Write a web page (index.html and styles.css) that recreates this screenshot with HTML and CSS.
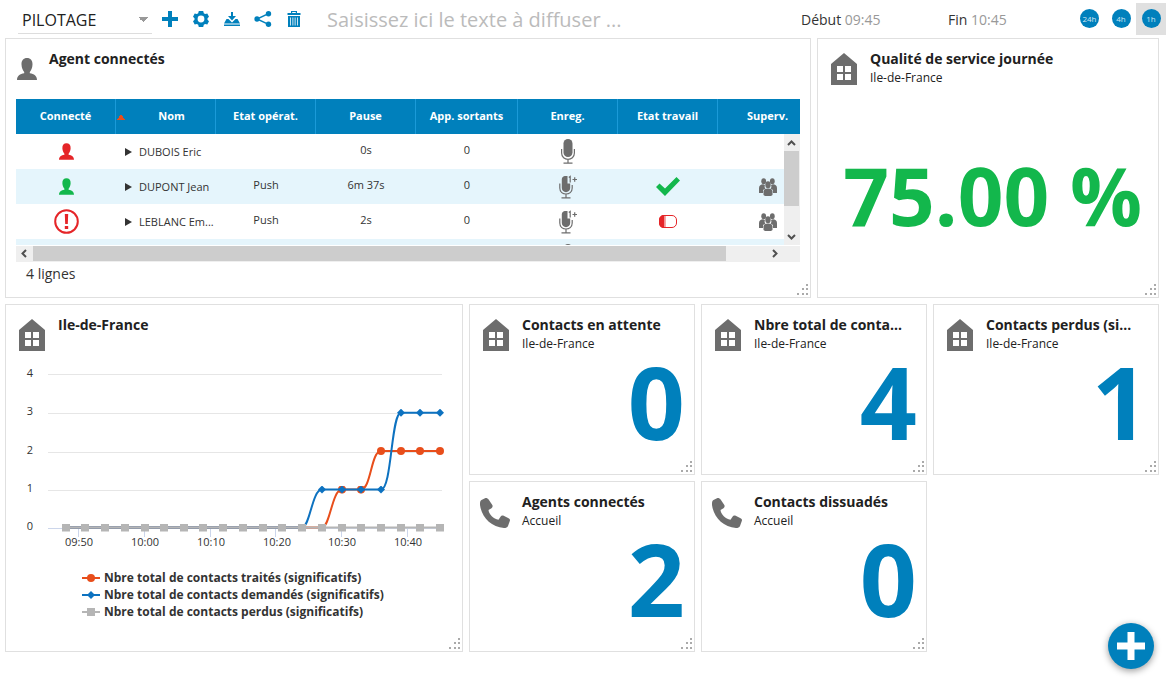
FILE: index.html
```html
<!DOCTYPE html>
<html lang="fr">
<head>
<meta charset="utf-8">
<title>Pilotage</title>
<link rel="stylesheet" href="styles.css">
</head>
<body>
<svg class="sprite" aria-hidden="true">
  <symbol id="house" viewBox="0 0 26 32"><path fill-rule="evenodd" d="M13 0 26 11V32H0V11ZM6 13V19H12V13ZM14 13V19H20V13ZM6 21V27H12V21ZM14 21V27H20V21Z"/></symbol>
  <symbol id="person" viewBox="0 0 20 22"><path d="M10 0C13.500 0 15.700 2.500 15.500 6.500C15.400 10 14 12.500 12.800 13.900V15.200C17 16 20 17.500 20 22H0C0 17.500 3 16 7.200 15.200V13.900C6 12.500 4.600 10 4.500 6.500C4.300 2.500 6.500 0 10 0Z"/></symbol>
  <symbol id="phone" viewBox="0 0 30 30"><path d="M5.500 0C7 0 8 .5 8.800 1.800L12.300 7C13 8.300 12.500 9.500 11.500 10.200L8.500 12C9 16.500 13.500 21 18.500 21.800L20.500 18.700C21.200 17.500 22.500 17.300 23.700 17.800L29 20.500C30 21.200 30.200 22 29.800 23L28 28C27.300 29.600 26 30 24 30C11 29 1.500 19 0 7C-.1 5 0 3 1.500 2Z"/></symbol>
  <symbol id="mic" viewBox="0 0 14 25"><rect x="2.500" width="9" height="18" rx="4.500"/><path d="M.6 10V14C.6 22.500 13.400 22.500 13.400 14V10M7 20V24M2.500 24.200H11.500" fill="none" stroke="currentColor" stroke-width="1.200"/></symbol>
  <symbol id="mic-plus" viewBox="0 0 19 24"><path d="M7 1C3.500 1 2.800 3 2.800 5V13C2.800 18.500 11.200 18.500 11.200 13V8.500H8.500V1Z"/><path d="M.8 8.500V13C.8 21 13.200 21 13.200 13V10M7 19V22.500M2.500 22.800H11.500M9.800 2.500 11.200 1.500V7.500M13.500 4.500H18M15.700 2.200V6.800" fill="none" stroke="currentColor" stroke-width="1.200"/></symbol>
  <symbol id="team" viewBox="0 0 18 18"><ellipse cx="4.700" cy="3.200" rx="2.400" ry="3"/><ellipse cx="13.300" cy="3.200" rx="2.400" ry="3"/><path d="M0 15V10C0 7.500 2 6.300 4 6.300L6 7C5.200 8.500 5.800 10 6.500 10.500L4 12V15ZM18 15V10C18 7.500 16 6.300 14 6.300L12 7C12.800 8.500 12.200 10 11.500 10.500L14 12V15Z"/><ellipse cx="9" cy="6.800" rx="2.700" ry="3.500"/><path d="M4.500 17V13.500C4.500 11.500 6 10.400 9 10.400S13.500 11.500 13.500 13.500V17L12 18H6Z"/></symbol>
  <symbol id="grip" viewBox="0 0 11 11"><path d="M9 0h2v2h-2zM9 4h2v2h-2zM9 9h2v2h-2zM5 4h2v2h-2zM5 9h2v2h-2zM0 9h2v2H0z"/></symbol>
</svg>

<header class="toolbar">
  <select class="board-select" aria-label="Tableau"><option>PILOTAGE</option></select>
  <div class="actions">
    <button type="button" aria-label="Ajouter"><svg width="16" height="16" viewBox="0 0 16 16"><path d="M6 0H10V6H16V10H10V16H6V10H0V6H6Z"/></svg></button>
    <button type="button" aria-label="Paramètres"><svg width="16" height="16" viewBox="0 0 16 16"><path fill-rule="evenodd" d="M5.800 0H10.200L10.800 2.200L12.100 3L14.300 2.400L16 5.700L14.500 7.300V8.700L16 10.300L14.300 13.600L12.100 13L10.800 13.800L10.200 16H5.800L5.200 13.800L3.900 13L1.700 13.600L0 10.300L1.500 8.700V7.300L0 5.700L1.700 2.400L3.900 3L5.200 2.200ZM8 4.600A3.400 3.400 0 1 0 8 11.400A3.400 3.400 0 1 0 8 4.600Z"/></svg></button>
    <button type="button" aria-label="Enregistrer"><svg width="16" height="16" viewBox="0 0 16 16"><path d="M7 1H9V5H12L8 9.500L4 5H7ZM0 12.500L2.500 8H4.500L8 11.500L11.500 8H13.500L16 12.500ZM0 13.500H16V15H0Z"/></svg></button>
    <button type="button" aria-label="Partager"><svg width="18" height="16" viewBox="0 0 18 16"><circle cx="3" cy="8" r="2.700"/><circle cx="14.500" cy="2.700" r="2.700"/><circle cx="14.500" cy="13.300" r="2.700"/><path d="M14.500 2.700 3 8 14.500 13.300" fill="none" stroke="currentColor" stroke-width="1.400"/></svg></button>
    <button type="button" aria-label="Supprimer"><svg width="14" height="16" viewBox="0 0 14 16"><path fill-rule="evenodd" d="M4 0H10V2H13.500V4H.5V2H4ZM5.200 1V2H8.800V1ZM1 5H13V16H1ZM3.200 6.500V14.500H4V6.500ZM5.500 6.500V14.500H6.300V6.500ZM7.700 6.500V14.500H8.500V6.500ZM10 6.500V14.500H10.800V6.500Z"/></svg></button>
  </div>
  <input class="broadcast" type="text" aria-label="Texte à diffuser" placeholder="Saisissez ici le texte à diffuser ...">
  <div class="period period-start">Début <time>09:45</time></div>
  <div class="period period-end">Fin <time>10:45</time></div>
  <div class="ranges">
    <button type="button"><span>24h</span></button>
    <button type="button"><span>4h</span></button>
    <button type="button" class="active"><span>1h</span></button>
  </div>
</header>

<main class="board">
  <section class="card card-agents">
    <header class="card-head">
      <svg class="head-icon head-person"><use href="#person"/></svg>
      <h2>Agent connectés</h2>
    </header>
    <div class="grid-frame">
      <div class="grid-view">
        <table class="agents">
          <colgroup><col><col><col><col><col class="wide"><col><col><col></colgroup>
          <thead>
            <tr><th>Connecté</th><th class="sorted">Nom</th><th>Etat opérat.</th><th>Pause</th><th>App. sortants</th><th>Enreg.</th><th>Etat travail</th><th>Superv.</th></tr>
          </thead>
          <tbody>
            <tr>
              <td><svg class="status red"><use href="#person"/></svg></td>
              <td class="name">DUBOIS Eric</td><td></td><td class="value">0s</td><td class="value">0</td>
              <td><svg class="mic"><use href="#mic"/></svg></td><td></td><td></td>
            </tr>
            <tr>
              <td><svg class="status green"><use href="#person"/></svg></td>
              <td class="name">DUPONT Jean</td><td class="value">Push</td><td class="value">6m 37s</td><td class="value">0</td>
              <td><svg class="mic-plus"><use href="#mic-plus"/></svg></td>
              <td><svg class="green" width="24" height="19" viewBox="0 0 24 19"><path d="M0 10 3.500 6.500 9 11.500 20.500 0 24 3.500 9 19Z"/></svg></td>
              <td><svg class="team"><use href="#team"/></svg></td>
            </tr>
            <tr>
              <td><svg class="red" width="25" height="25" viewBox="0 0 25 25"><circle cx="12.500" cy="12.500" r="11.300" fill="none" stroke="currentColor" stroke-width="2"/><path d="M10.800 5H14.200L13.800 15H11.200ZM10.800 17H14.200V20H10.800Z"/></svg></td>
              <td class="name">LEBLANC Em...</td><td class="value">Push</td><td class="value">2s</td><td class="value">0</td>
              <td><svg class="mic-plus"><use href="#mic-plus"/></svg></td>
              <td><svg class="red" width="18" height="13" viewBox="0 0 18 13"><rect x=".5" y=".5" width="17" height="12" rx="4.500" fill="#fff" stroke="currentColor"/><path d="M5 0H5.500V13H5C2 13 0 11 0 8V5C0 2 2 0 5 0Z"/><path d="M6.500 1V12" stroke="#f3a9a9"/></svg></td>
              <td><svg class="team"><use href="#team"/></svg></td>
            </tr>
            <tr>
              <td></td><td></td><td></td><td></td><td></td>
              <td><svg class="mic"><use href="#mic"/></svg></td><td></td><td></td>
            </tr>
          </tbody>
        </table>
      </div>
      <div class="vscroll" aria-hidden="true">
        <svg width="9" height="6" viewBox="0 0 9 6"><path d="M1 5 4.500 1.500 8 5"/></svg>
        <div class="vthumb"></div>
        <svg class="end" width="9" height="6" viewBox="0 0 9 6"><path d="M1 1 4.500 4.500 8 1"/></svg>
      </div>
      <div class="hscroll" aria-hidden="true">
        <svg width="6" height="9" viewBox="0 0 6 9"><path d="M5 1 1.500 4.500 5 8"/></svg>
        <div class="hthumb"></div>
        <svg class="end" width="6" height="9" viewBox="0 0 6 9"><path d="M1 1 4.500 4.500 1 8"/></svg>
      </div>
    </div>
    <p class="count">4 lignes</p>
    <svg class="grip"><use href="#grip"/></svg>
  </section>

  <section class="card card-quality">
    <header class="card-head">
      <svg class="head-icon"><use href="#house"/></svg>
      <div><h2>Qualité de service journée</h2><p>Ile-de-France</p></div>
    </header>
    <div class="rate">75.00 %</div>
    <svg class="grip"><use href="#grip"/></svg>
  </section>

  <section class="card card-chart">
    <header class="card-head">
      <svg class="head-icon"><use href="#house"/></svg>
      <h2>Ile-de-France</h2>
    </header>
    <svg class="chart" viewBox="6 360 456 192" role="img" aria-label="Contacts Ile-de-France">
      <defs>
        <marker id="dot" markerUnits="userSpaceOnUse" markerWidth="8" markerHeight="8" refX="4" refY="4"><circle cx="4" cy="4" r="4" fill="#e84e1b"/></marker>
        <marker id="diamond" markerUnits="userSpaceOnUse" markerWidth="8" markerHeight="8" refX="4" refY="4"><path d="M4 0 8 4 4 8 0 4Z" fill="#0d72c0"/></marker>
        <marker id="square" markerUnits="userSpaceOnUse" markerWidth="8" markerHeight="8" refX="4" refY="4"><path d="M0 0H8V8H0Z" fill="#b5b5b5"/></marker>
      </defs>
      <path class="gridline" d="M48 374.500H442M48 413.500H442M48 452.500H442M48 490.500H442"/>
      <path class="axis" d="M48 528.500H442M78.500 528V537M144.500 528V537M210.500 528V537M275.500 528V537M341.500 528V537M407.500 528V537"/>
      <g class="ylabels"><text x="30" y="377">4</text><text x="30" y="415">3</text><text x="30" y="454">2</text><text x="30" y="492">1</text><text x="30" y="530">0</text></g>
      <g class="xlabels"><text x="79" y="546">09:50</text><text x="145" y="546">10:00</text><text x="211" y="546">10:10</text><text x="277" y="546">10:20</text><text x="342" y="546">10:30</text><text x="408" y="546">10:40</text></g>
      <path class="line orange" d="M66 527.500H322C330 527.500 332 489.500 342 489.500H361C371 489.500 371 451 381 451H440"/>
      <path class="points-dot" d="M342 489.500H361L381 451H401H420H440"/>
      <path class="line blue" d="M66 527.500H302C310 527.500 312 489.500 322 489.500H381C392 489.500 391 412.700 401 412.700H440"/>
      <path class="points-diamond" d="M322 489.500H342H361H381L401 412.700H420H440"/>
      <path class="line grey" d="M66 527.500H440"/>
      <path class="points-square" d="M66 527.500H85H105H125H145H164H184H203H223H243H263H282H302H322H342H361H381H401H420H440"/>
    </svg>
    <ul class="legend">
      <li><svg width="18" height="10" viewBox="0 0 18 10"><path class="line orange" d="M0 5H18"/><circle cx="9" cy="5" r="4" fill="#e84e1b"/></svg>Nbre total de contacts traités (significatifs)</li>
      <li><svg width="18" height="10" viewBox="0 0 18 10"><path class="line blue" d="M0 5H18"/><path d="M9 1 13 5 9 9 5 5Z" fill="#0d72c0"/></svg>Nbre total de contacts demandés (significatifs)</li>
      <li><svg width="18" height="10" viewBox="0 0 18 10"><path class="line grey" d="M0 5H18"/><path d="M5 1H13V9H5Z" fill="#b5b5b5"/></svg>Nbre total de contacts perdus (significatifs)</li>
    </ul>
    <svg class="grip"><use href="#grip"/></svg>
  </section>

  <section class="card card-kpi">
    <header class="card-head">
      <svg class="head-icon"><use href="#house"/></svg>
      <div><h2>Contacts en attente</h2><p>Ile-de-France</p></div>
    </header>
    <div class="kpi">0</div>
    <svg class="grip"><use href="#grip"/></svg>
  </section>
  <section class="card card-kpi">
    <header class="card-head">
      <svg class="head-icon"><use href="#house"/></svg>
      <div><h2>Nbre total de conta...</h2><p>Ile-de-France</p></div>
    </header>
    <div class="kpi">4</div>
    <svg class="grip"><use href="#grip"/></svg>
  </section>
  <section class="card card-kpi">
    <header class="card-head">
      <svg class="head-icon"><use href="#house"/></svg>
      <div><h2>Contacts perdus (si...</h2><p>Ile-de-France</p></div>
    </header>
    <div class="kpi">1</div>
    <svg class="grip"><use href="#grip"/></svg>
  </section>
  <section class="card card-kpi">
    <header class="card-head">
      <svg class="head-icon head-phone"><use href="#phone"/></svg>
      <div><h2>Agents connectés</h2><p>Accueil</p></div>
    </header>
    <div class="kpi">2</div>
    <svg class="grip"><use href="#grip"/></svg>
  </section>
  <section class="card card-kpi">
    <header class="card-head">
      <svg class="head-icon head-phone"><use href="#phone"/></svg>
      <div><h2>Contacts dissuadés</h2><p>Accueil</p></div>
    </header>
    <div class="kpi">0</div>
    <svg class="grip"><use href="#grip"/></svg>
  </section>
</main>

<button type="button" class="fab" aria-label="Ajouter un widget"><svg width="28" height="28" viewBox="0 0 28 28"><path d="M10.500 0H17.500V10.500H28V17.500H17.500V28H10.500V17.500H0V10.500H10.500Z"/></svg></button>
</body>
</html>
```
FILE: styles.css
```css
* { box-sizing: border-box; }

body {
  margin: 0;
  background: #fff;
  color: #333;
  font-family: "Open Sans", "Noto Sans", sans-serif;
}

h2, p, ul { margin: 0; padding: 0; }
button { border: 0; padding: 0; background: none; font-family: inherit; cursor: pointer; }
svg { fill: currentColor; }
.sprite { position: absolute; width: 0; height: 0; }
.red { color: #e52528; }
.green { color: #13b74c; }

/* Toolbar */
.toolbar { display: flex; align-items: center; height: 38px; padding-left: 18px; }
.board-select {
  appearance: none;
  width: 134px;
  height: 28px;
  margin-top: 2px;
  padding: 0 20px 0 4px;
  border: 0;
  border-bottom: 1px solid #ddd;
  border-radius: 0;
  background:
    linear-gradient(to top right, transparent 50%, #999 50%) 120px 11px / 5px 5px no-repeat,
    linear-gradient(to top left, transparent 50%, #999 50%) 125px 11px / 5px 5px no-repeat;
  color: #212121;
  font: 16px "Open Sans", sans-serif;
}
.actions { display: flex; margin-left: 2px; color: #0080bc; }
.actions button { display: grid; place-items: center; width: 31px; height: 38px; color: inherit; }
.broadcast {
  flex: 1;
  min-width: 0;
  margin-left: 18px;
  padding: 0;
  border: 0;
  background: none;
  color: #333;
  font: 20px "Open Sans", sans-serif;
}
.broadcast::placeholder { color: #bbb; opacity: 1; }
.period { font-size: 14px; line-height: 20px; padding-top: 2px; }
.period time { color: #999; }
.period-start { width: 147px; }
.period-end { width: 127px; }
.ranges { display: flex; }
.ranges button { display: grid; place-items: center; width: 30px; height: 32px; padding-bottom: 1px; }
.ranges button:first-child { width: 31px; padding-right: 2px; }
.ranges .active { background: #e0e0e0; }
.ranges span {
  display: grid;
  place-items: center;
  width: 19px;
  height: 19px;
  border-radius: 50%;
  background: #0080bc;
  color: #cfe6f2;
  font-size: 8px;
}

/* Widgets */
.board {
  display: grid;
  grid-template-columns: repeat(10, minmax(0, 1fr));
  grid-template-rows: minmax(260px, auto) repeat(2, minmax(171px, auto));
  gap: 6px;
  padding: 0 7px 37px 5px;
}
.card { position: relative; display: flex; flex-direction: column; border: 1px solid #e0e0e0; background: #fff; }
.card-agents { grid-column: span 7; padding: 0 10px; }
.card-quality { grid-column: span 3; }
.card-chart { grid-column: span 4; grid-row: span 2; }
.card-kpi { grid-column: span 2; }
.card-head { display: flex; gap: 13px; padding: 10px 12px 0 13px; }
.card-agents .card-head { gap: 12px; height: 60px; padding-left: 1px; }
.head-icon { flex: none; width: 26px; height: 32px; margin-top: 4px; color: #6d6d6d; }
.head-person { width: 20px; height: 22px; margin-top: 9px; }
.head-phone { width: 30px; height: 30px; margin: 6px -1px 0 -3px; }
.card-head h2 { color: #212121; font-size: 14px; font-weight: 700; line-height: 20px; white-space: nowrap; }
.card-head p { color: #212121; font-size: 12px; line-height: 17px; }
.grip { position: absolute; right: 2px; bottom: 2px; width: 11px; height: 11px; color: #aaa; }
.rate { padding: 54px 16px 0; color: #13b74c; font-size: 80px; font-weight: 700; line-height: 109px; text-align: right; white-space: nowrap; }
.kpi { padding-right: 9px; color: #0080bc; font-size: 100px; font-weight: 700; line-height: 98px; text-align: right; }

/* Agents grid */
.grid-frame { position: relative; }
.grid-view { height: 146px; overflow: hidden; }
.agents { width: 802px; border-collapse: separate; border-spacing: 0; table-layout: fixed; font-size: 11px; text-align: center; }
.agents col { width: 100px; }
.agents .wide { width: 102px; }
.agents th { height: 35px; padding: 0 0 2px; border-right: 1px solid #1b9ad8; background: #0080bc; color: #fff; font-weight: 700; }
.agents .sorted {
  padding-left: 12px;
  background-image: linear-gradient(to bottom right, transparent 50%, #e84e1b 50%), linear-gradient(to bottom left, transparent 50%, #e84e1b 50%);
  background-position: 1px 15px, 5px 15px;
  background-size: 4px 6px;
  background-repeat: no-repeat;
}
.agents tr { height: 35px; }
.agents td { height: 35px; padding: 0; white-space: nowrap; }
.agents tbody tr:nth-child(even) { background: #e5f5fc; }
.agents td svg { display: block; margin: 0 auto; }
.agents .name { padding-left: 9px; text-align: left; }
.agents .name::before {
  content: "";
  display: inline-block;
  margin-right: 7px;
  border-left: 7px solid #333;
  border-top: 4px solid transparent;
  border-bottom: 4px solid transparent;
}
.agents .value { padding-bottom: 4px; }
.agents .status { width: 15px; height: 17px; }
.agents .mic { width: 14px; height: 25px; color: #6d6d6d; }
.agents .mic-plus { width: 19px; height: 24px; color: #6d6d6d; }
.agents .team { width: 18px; height: 18px; color: #6d6d6d; }
.vscroll {
  position: absolute;
  top: 35px;
  right: 0;
  display: flex;
  flex-direction: column;
  align-items: center;
  width: 16px;
  height: 111px;
  padding: 6px 1px 5px 0;
  background: #efefef;
}
.vscroll svg, .hscroll svg { flex: none; fill: none; stroke: #505050; stroke-width: 2; }
.vthumb { width: 15px; height: 55px; margin-top: 5px; background: #cdcdcd; }
.vscroll .end { margin-top: auto; }
.hscroll { display: flex; align-items: center; height: 17px; padding: 0 22px 1px 5px; border-top: 1px solid #fff; background: #efefef; }
.hthumb { flex: 0 0 693px; height: 15px; margin-left: 6px; background: #cdcdcd; }
.hscroll .end { margin-left: auto; }
.count { padding: 2px 10px; font-size: 14px; line-height: 20px; }

/* Chart */
.chart { display: block; width: 100%; margin-top: 9px; }
.chart text { fill: #333; font-size: 11px; text-anchor: middle; }
.gridline { fill: none; stroke: #e6e6e6; }
.axis { fill: none; stroke: #ccd6eb; }
.line { fill: none; stroke-width: 2; }
.orange { stroke: #e84e1b; }
.blue { stroke: #0d72c0; }
.grey { stroke: #b5b5b5; }
.points-dot, .points-diamond, .points-square { fill: none; stroke: none; }
.points-dot { marker: url(#dot); }
.points-diamond { marker: url(#diamond); }
.points-square { marker: url(#square); }
.legend { padding: 17px 0 20px 76px; list-style: none; font-size: 12px; font-weight: 700; line-height: 17px; }
.legend li { display: flex; align-items: center; gap: 4px; white-space: nowrap; }

.fab {
  position: fixed;
  right: 12px;
  bottom: 20px;
  display: grid;
  place-items: center;
  width: 46px;
  height: 46px;
  border-radius: 50%;
  background: #0080bc;
  box-shadow: 0 2px 7px rgba(0, 0, 0, .4);
  color: #fff;
}
```
